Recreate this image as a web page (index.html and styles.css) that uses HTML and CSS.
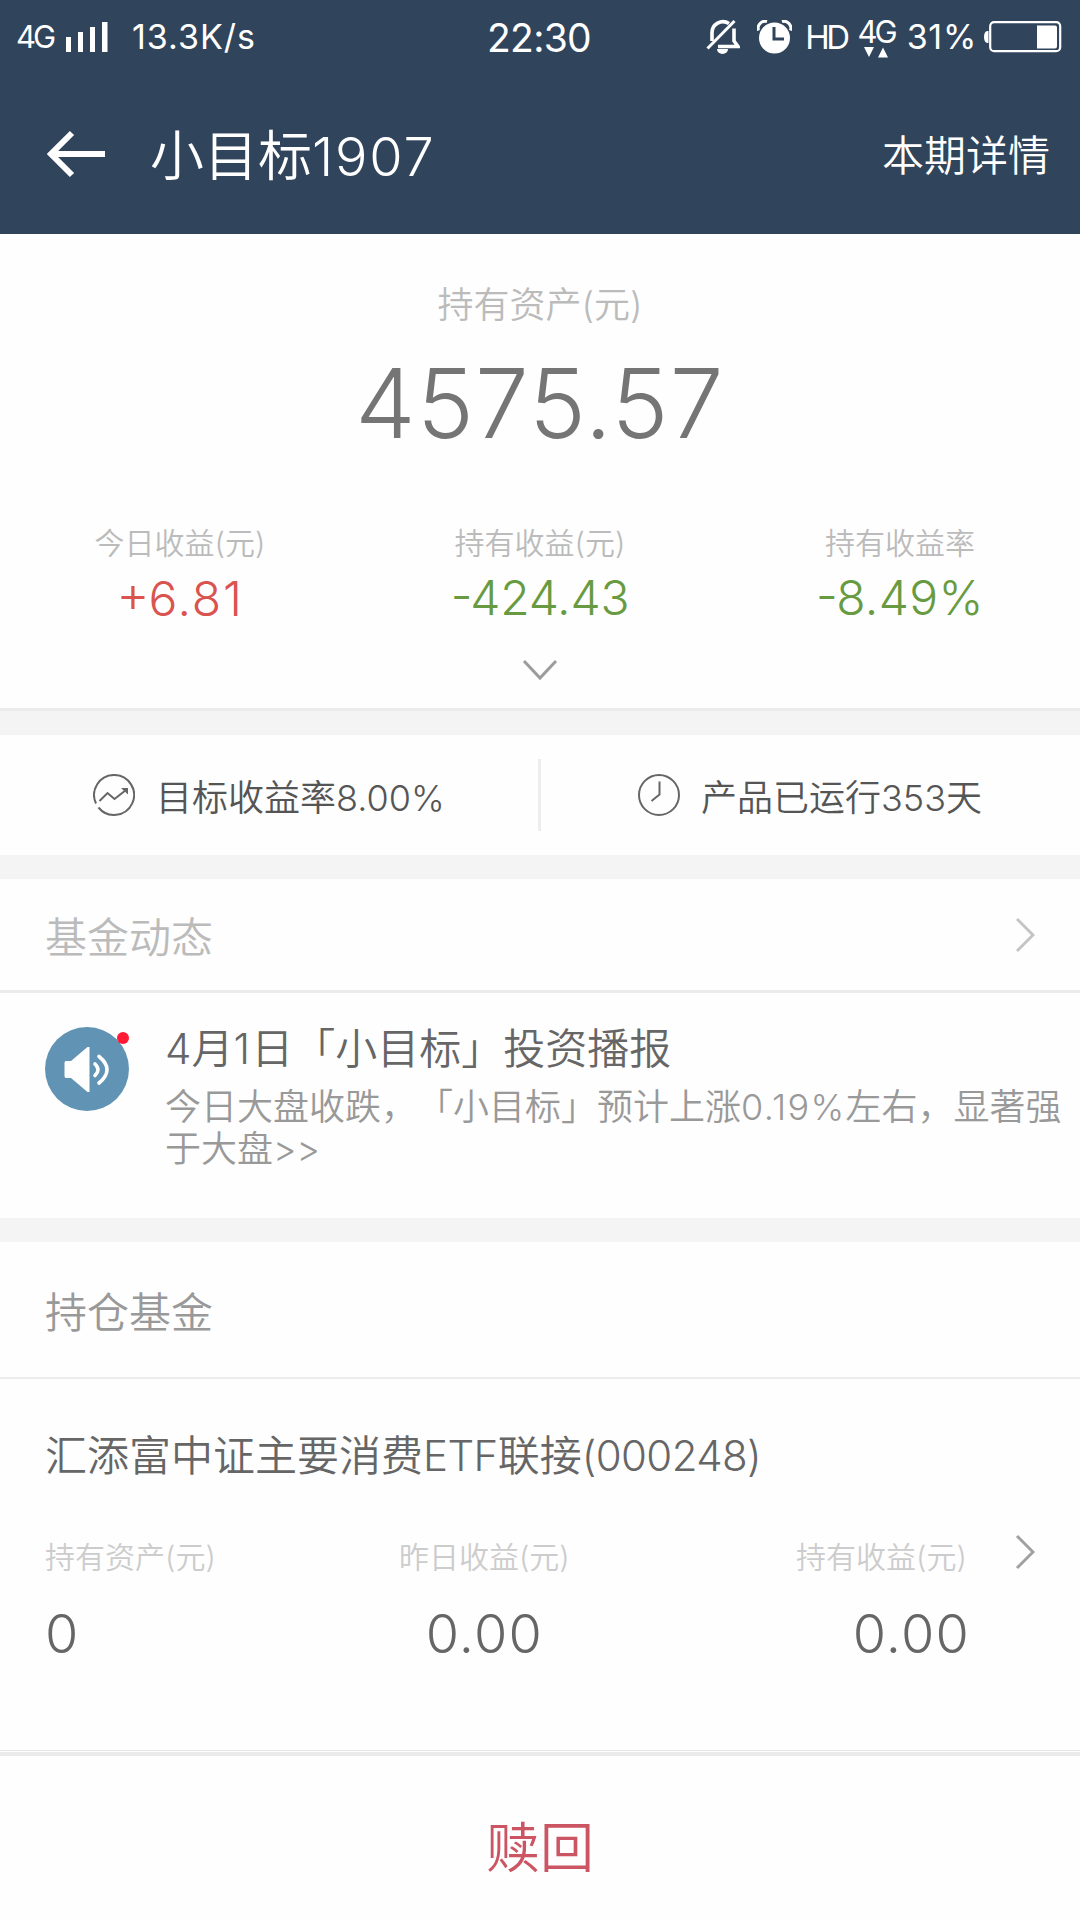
FILE: index.html
```html
<!DOCTYPE html>
<html lang="zh-CN">
<head>
<meta charset="utf-8">
<title>小目标1907</title>
<link rel="stylesheet" href="styles.css">
</head>
<body>
<header class="top">
  <div class="status">
    <div class="status-left">
      <span class="net">4G</span>
      <svg class="signal" width="42" height="30" viewBox="0 0 42 30" fill="#fff"><path d="M0 15h5v15H0zM12 10h5v20h-5zM24 5h5v25h-5zM36 0h5.500v30H36z"/></svg>
      <span class="speed">13.3K/s</span>
    </div>
    <span class="time">22:30</span>
    <div class="status-right">
      <svg class="bell" width="34" height="36" viewBox="0 0 34 36" fill="none" stroke="#fff" stroke-width="3.600"><path d="M6 22V14a11 11 0 0 1 17-9.500M28 9.500V22l4 5.500H12"/><path d="M1.500 29.500L28.500 2" stroke-width="3"/><path d="M11 30h11a5.500 5 0 0 1-11 0z" fill="#fff" stroke="none"/></svg>
      <svg class="alarm" width="35" height="34" viewBox="0 0 35 34"><circle cx="17.500" cy="18" r="15.500" fill="#fff"/><path d="M1.500 10.500A7 7 0 0 1 10 1.500M33.500 10.500A7 7 0 0 0 25 1.500" fill="none" stroke="#fff" stroke-width="3"/><path d="M17 7v12h10" fill="none" stroke="#30445c" stroke-width="3"/></svg>
      <span class="hd">HD</span>
      <span class="data"><span class="net">4G</span><svg width="24" height="11" viewBox="0 0 24 11" fill="#fff"><path d="M0 0h10L5 10zM14 10.500h10L19 .5z"/></svg></span>
      <span class="percent">31%</span>
      <svg class="battery" width="78" height="32" viewBox="0 0 78 32"><rect x="6.200" y="1.200" width="70" height="29" rx="4" fill="none" stroke="#fff" stroke-width="2.200"/><path d="M4.500 10v12H3q-3-1-3-6t3-6zM53 4.500h18q2 0 2 2v19q0 2-2 2H53z" fill="#fff"/></svg>
    </div>
  </div>
  <nav class="nav">
    <svg class="back" width="60" height="50" viewBox="0 0 60 50" fill="none" stroke="#fff" stroke-width="6"><path d="M26 4L5 25l21 21M5 25h54"/></svg>
    <h1 class="title">小目标<span class="loose">1907</span></h1>
    <a class="detail">本期详情</a>
  </nav>
</header>

<section class="summary">
  <div class="summary-label">持有资产(元)</div>
  <div class="summary-total">4575.57</div>
  <div class="stats">
    <div class="stat"><div class="stat-label">今日收益(元)</div><div class="stat-value up"><span class="plus">+</span>6.81</div></div>
    <div class="stat"><div class="stat-label">持有收益(元)</div><div class="stat-value down tight"><span class="minus">-</span>424.43</div></div>
    <div class="stat"><div class="stat-label">持有收益率</div><div class="stat-value down"><span class="minus">-</span>8.49%</div></div>
  </div>
  <svg class="expand" width="36" height="22" viewBox="0 0 36 22" fill="none" stroke="#9c9c9c" stroke-width="3"><path d="M2 2l16 17L34 2"/></svg>
</section>

<section class="facts">
  <div class="fact fact-rate">
    <svg width="42" height="42" viewBox="0 0 42 42" fill="none" stroke="#666" stroke-width="2"><path d="M3 29.500A20 20 0 1 1 5.500 33.500"/><path d="M6.500 27l8-8 7 6L33 16"/><path d="M28 14h7v6.500z" fill="#666" stroke="none"/></svg>
    <span>目标收益率8.00%</span>
  </div>
  <div class="fact-divider"></div>
  <div class="fact fact-days">
    <svg width="42" height="42" viewBox="0 0 42 42" fill="none" stroke="#666" stroke-width="2"><circle cx="21" cy="21" r="20"/><path d="M21.500 7.500V20.500L13.500 27"/></svg>
    <span>产品已运行353天</span>
  </div>
</section>

<section class="news">
  <div class="news-head">
    <span>基金动态</span>
    <svg width="20" height="36" viewBox="0 0 20 36" fill="none" stroke="#c4c4c4" stroke-width="3"><path d="M2 2l16 16L2 34"/></svg>
  </div>
  <article class="news-item">
    <div class="speaker">
      <svg width="84" height="84" viewBox="0 0 84 84"><circle cx="42" cy="42" r="42" fill="#6193b4"/><path d="M21 34h5l16.500-14h2v45h-2L26 51h-5q-1.500 0-1.500-2V36q0-2 1.500-2z" fill="#fff"/><path d="M50 37q6 5.500 0 11.500M54 29.500q16 13 0 26.500" fill="none" stroke="#fff" stroke-width="3.600" stroke-linecap="round"/></svg>
      <i class="unread"></i>
    </div>
    <div class="news-body">
      <h2 class="news-title">4月<span class="loose">1</span>日「小目标」投资播报</h2>
      <p class="news-text">今日大盘收跌，「小目标」预计上涨<span class="loose">0.19%</span>左右，显著强于大盘&gt;&gt;</p>
    </div>
  </article>
</section>

<section class="funds">
  <div class="funds-head">持仓基金</div>
  <div class="fund">
    <h2 class="fund-name">汇添富中证主要消费<span class="fund-code">ETF</span>联接<span class="fund-code">(000248)</span></h2>
    <div class="fund-grid">
      <div class="cell first"><div class="cell-label">持有资产(元)</div><div class="cell-value">0</div></div>
      <div class="cell middle"><div class="cell-label">昨日收益(元)</div><div class="cell-value">0.00</div></div>
      <div class="cell last"><div class="cell-label">持有收益(元)</div><div class="cell-value">0.00</div></div>
      <svg class="go" width="20" height="36" viewBox="0 0 20 36" fill="none" stroke="#a0a0a0" stroke-width="3"><path d="M2 2l16 16L2 34"/></svg>
    </div>
  </div>
</section>

<footer class="redeem">赎回</footer>
</body>
</html>
```

FILE: styles.css
```css
* { box-sizing: border-box; }

body {
  margin: 0;
  width: 1080px;
  height: 1920px;
  overflow: hidden;
  display: flex;
  flex-direction: column;
  background: #fefefe;
  color: #666;
  font-family: Inter, "Noto Sans CJK SC", sans-serif;
  font-weight: 350;
  text-spacing-trim: space-all;
  white-space: nowrap;
}

svg { display: block; flex: none; }
h1, h2, p { margin: 0; font-weight: inherit; }
.top, .summary, .facts, .news, .funds { flex: none; }
.loose { letter-spacing: 1.300px; }

.top { height: 234px; background: #30445c; color: #fff; }

.status {
  height: 74px;
  padding: 0 18px 0 16px;
  display: grid;
  grid-template-columns: 1fr auto 1fr;
  align-items: center;
  line-height: 40px;
  font-weight: 400;
}
.status-left, .status-right { display: flex; align-items: center; }
.status-right { justify-content: flex-end; }
.net { font-size: 31px; letter-spacing: -3px; }
.status-left .net { width: 50px; }
.speed { margin-left: 24px; font-size: 34px; letter-spacing: 1px; }
.time { padding-top: 1px; font-size: 39px; letter-spacing: -.7px; }
.alarm { margin-left: 17px; }
.hd { margin-left: 13px; font-size: 33px; letter-spacing: -3.500px; }
.data { margin-left: 11px; display: flex; flex-direction: column; align-items: center; }
.data .net { line-height: 30px; }
.percent { margin-left: 12px; font-size: 34px; letter-spacing: .7px; }
.battery { margin-left: 7px; }

.nav { height: 160px; padding: 0 30px 0 46px; display: flex; align-items: center; }
.title { margin-left: 44px; padding-top: 6px; font-size: 54px; line-height: 70px; }
.title .loose { letter-spacing: 1.800px; }
.detail { margin-left: auto; padding-top: 4px; font-size: 42px; line-height: 60px; }

.summary {
  height: 477px;
  padding-top: 50px;
  border-bottom: 3px solid #ebebeb;
  text-align: center;
}
.summary-label { font-size: 36px; line-height: 42px; color: #bbb; }
.summary-total { margin-top: 27px; font-size: 96px; line-height: 100px; letter-spacing: 1.200px; color: #757575; }
.stats { margin-top: 72px; display: grid; grid-template-columns: repeat(3, 1fr); }
.stat-label { font-size: 30px; line-height: 36px; color: #bbb; }
.stat-value {
  margin-top: 7px;
  font-size: 48px;
  line-height: 60px;
  font-feature-settings: "case";
}
.up { color: #d9534f; letter-spacing: 1.800px; }
.down { color: #689b41; letter-spacing: .4px; }
.tight { letter-spacing: -.2px; }
.plus { margin-right: -3px; font-size: 51px; }
.minus { margin-right: -2px; }
.expand { margin: 30px auto 0; }

.facts {
  height: 168px;
  border: solid #f4f4f4;
  border-width: 24px 0;
  display: flex;
  align-items: center;
  font-size: 36px;
  line-height: 50px;
  color: #555;
}
.fact { display: flex; align-items: center; }
.fact span { padding-top: 5px; }
.fact-rate { width: 538px; padding-left: 93px; gap: 21px; }
.fact-divider { width: 3px; height: 72px; background: #ededed; }
.fact-days { padding-left: 97px; gap: 21px; }

.news { height: 363px; border-bottom: 24px solid #f4f4f4; }
.news-head {
  height: 114px;
  padding: 0 45px;
  display: flex;
  align-items: center;
  justify-content: space-between;
  border-bottom: 3px solid #ebebeb;
  font-size: 42px;
  line-height: 60px;
  color: #bbb;
}
.news-head span { padding-top: 6px; }
.news-item { padding: 34px 0 0 45px; display: flex; }
.speaker { position: relative; flex: none; width: 84px; height: 84px; }
.unread { position: absolute; right: 0; top: 5px; width: 12px; height: 12px; border-radius: 50%; background: #ff1a35; }
.news-body { margin-left: 36px; width: 906px; }
.news-title { margin-top: -8px; font-size: 42px; line-height: 60px; color: #666; }
.news-text { margin-top: 7px; font-size: 36px; line-height: 42px; color: #999; white-space: normal; }
.news-text .loose { display: inline-block; }

.funds { height: 508px; }
.funds-head {
  height: 137px;
  padding: 5px 45px 0;
  border-bottom: 2px solid #ebebeb;
  font-size: 42px;
  line-height: 132px;
  color: #999;
}
.fund { padding: 47px 45px 0; }
.fund-name { font-size: 42px; line-height: 60px; }
.fund-code { letter-spacing: -.6px; }
.fund-grid { margin-top: 51px; display: flex; }
.cell-label { font-size: 30px; line-height: 40px; color: #ccc; }
.cell-value { margin-top: 27px; font-size: 54px; line-height: 60px; letter-spacing: 1.200px; }
.middle { margin-left: 183px; text-align: center; }
.last { margin-left: auto; text-align: right; }
.last .cell-value { margin-right: -3px; }
.go { margin-left: 48px; margin-top: -3px; }

.redeem {
  flex: 1;
  padding-top: 2px;
  border-top: 1px solid #e6e6e6;
  box-shadow: inset 0 1px #fefefe, inset 0 5px #ebebeb;
  text-align: center;
  font-size: 54px;
  line-height: 192px;
  color: #cb5563;
}
```
